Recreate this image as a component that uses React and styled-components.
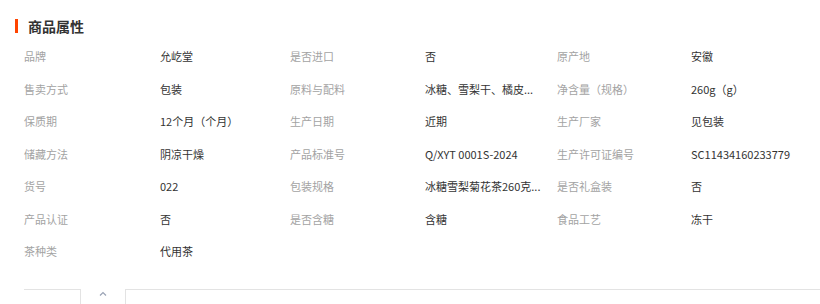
import { Fragment } from "react";
import styled, { createGlobalStyle } from "styled-components";

const Global = createGlobalStyle`
  body {
    margin: 0;
    background: #ffffff;
    font-family: "Noto Sans CJK SC", "Noto Sans", sans-serif;
  }
`;

// values longer than the cell are shown cut short, as on the page
const attrs = [
  ["品牌", "允屹堂"],
  ["是否进口", "否"],
  ["原产地", "安徽"],
  ["售卖方式", "包装"],
  ["原料与配料", "冰糖、雪梨干、橘皮..."],
  ["净含量（规格）", "260g（g）"],
  ["保质期", "12个月（个月）"],
  ["生产日期", "近期"],
  ["生产厂家", "见包装"],
  ["储藏方法", "阴凉干燥"],
  ["产品标准号", "Q/XYT 0001S-2024"],
  ["生产许可证编号", "SC11434160233779"],
  ["货号", "022"],
  ["包装规格", "冰糖雪梨菊花茶260克..."],
  ["是否礼盒装", "否"],
  ["产品认证", "否"],
  ["是否含糖", "含糖"],
  ["食品工艺", "冻干"],
  ["茶种类", "代用茶"],
];

export default function App() {
  return (
    <Page>
      <Global />
      <Title>商品属性</Title>
      <Grid>
        {attrs.map(([label, value]) => (
          <Fragment key={label}>
            <Label>{label}</Label>
            <Value>{value}</Value>
          </Fragment>
        ))}
      </Grid>
      <Fold>
        <Edge />
        <Tab>
          <svg width="8" height="5" viewBox="0 0 8 5">
            <path d="M1 4.5 L4 1.5 L7 4.5" fill="none" stroke="#9aa3b5" strokeWidth="1.2" />
          </svg>
        </Tab>
        <Edge $grow />
      </Fold>
    </Page>
  );
}

const Page = styled.div`
  width: 820px;
  height: 304px;
  overflow: hidden;
  padding-top: 18px;
  box-sizing: border-box;
`;

const Title = styled.h3`
  margin: 0 0 0 15px;
  padding-left: 10px;
  border-left: 3px solid #ff4400;
  height: 14px;
  line-height: 14px;
  font-size: 14px;
  font-weight: 700;
  color: #333333;
  transform: translateY(1px);
`;

const Grid = styled.div`
  margin: 8px 0 0 24px;
  display: grid;
  grid-template-columns: 136px 130px 135px 132px 134px 1fr;
  grid-auto-rows: 32.5px;
  align-items: center;
`;

const Label = styled.span`
  font-size: 11px;
  color: #a3a3a3;
  white-space: nowrap;
`;

const Value = styled.span`
  font-size: 11px;
  color: #333333;
  white-space: nowrap;
`;

const Fold = styled.div`
  display: flex;
  margin: 21px 0 0 24px;
  height: 20px;
`;

const Edge = styled.div`
  width: ${(p) => (p.$grow ? "auto" : "56px")};
  flex: ${(p) => (p.$grow ? 1 : "none")};
  border-top: 1px solid #e3e3e3;
`;

const Tab = styled.div`
  width: 44px;
  border-left: 1px solid #e3e3e3;
  border-right: 1px solid #e3e3e3;
  display: flex;
  justify-content: center;
  align-items: flex-start;
  padding-top: 2px;
`;
